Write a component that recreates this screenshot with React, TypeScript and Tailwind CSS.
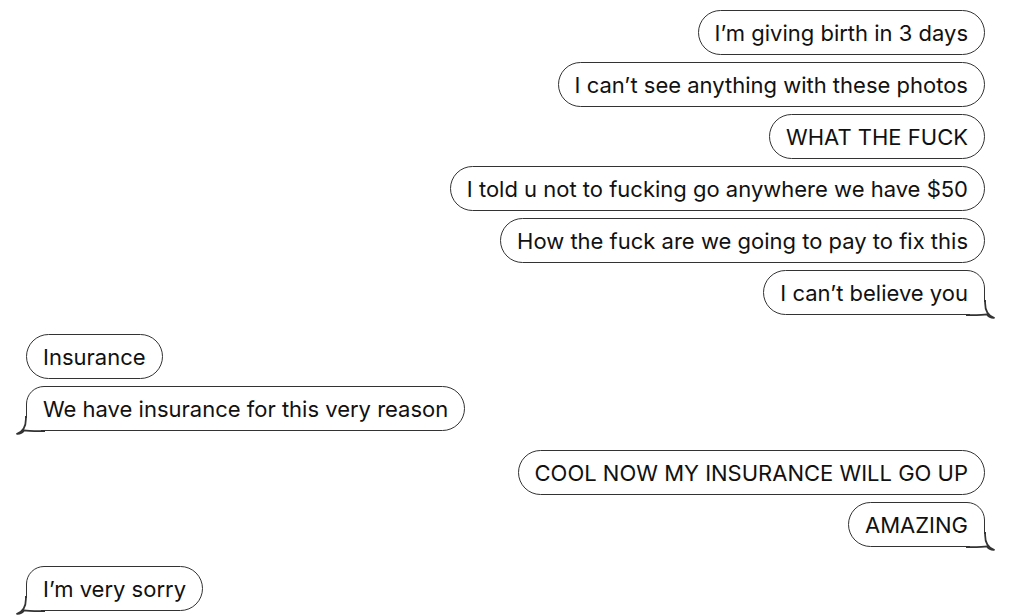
import React from "react";

type Msg = { text: string; tail?: boolean };
type Group = { side: "left" | "right"; messages: Msg[] };

const groups: Group[] = [
  {
    side: "right",
    messages: [
      { text: "I’m giving birth in 3 days" },
      { text: "I can’t see anything with these photos" },
      { text: "WHAT THE FUCK" },
      { text: "I told u not to fucking go anywhere we have $50" },
      { text: "How the fuck are we going to pay to fix this" },
      { text: "I can’t believe you", tail: true },
    ],
  },
  {
    side: "left",
    messages: [
      { text: "Insurance" },
      { text: "We have insurance for this very reason", tail: true },
    ],
  },
  {
    side: "right",
    messages: [
      { text: "COOL NOW MY INSURANCE WILL GO UP" },
      { text: "AMAZING", tail: true },
    ],
  },
  {
    side: "left",
    messages: [{ text: "I’m very sorry", tail: true }],
  },
];

// drawn for the right side, flipped for the left
function Tail({ side }: { side: "left" | "right" }) {
  return (
    <svg
      width="30"
      height="20"
      viewBox="0 0 30 20"
      className={
        side === "right"
          ? "pointer-events-none absolute -right-[11.75px] -bottom-[5.75px]"
          : "pointer-events-none absolute -left-[11.75px] -bottom-[5.75px]"
      }
    >
      <g transform={side === "left" ? "translate(30 0) scale(-1 1)" : undefined}>
        <rect x="12" y="2" width="10" height="16" fill="#fff" />
        <rect x="4" y="13" width="18" height="5" fill="#fff" />
        <path
          d="M19.1 0 L19.1 3 C19.1 10 21.5 15.5 28 17.8 C25 18 22.6 16.6 21 14.4 C17.5 15.1 12 15.1 5 15.1 L0 15.1"
          fill="none"
          stroke="#333"
          strokeWidth="1.75"
          strokeLinejoin="round"
          strokeLinecap="round"
        />
      </g>
    </svg>
  );
}

function Bubble({ side, text, tail }: { side: "left" | "right"; text: string; tail?: boolean }) {
  let shape = "rounded-[22.5px]";
  if (tail) shape = side === "right" ? "rounded-l-[22.5px] rounded-tr-[18px]" : "rounded-r-[22.5px] rounded-tl-[18px]";
  return (
    <div className={side === "right" ? "flex justify-end" : "flex justify-start"}>
      <div className={`relative flex h-[45px] items-center border-[1.75px] border-[#333] bg-white px-4 ${shape}`}>
        <span className="whitespace-nowrap text-[22px] leading-none text-[#111]">{text}</span>
        {tail && <Tail side={side} />}
      </div>
    </div>
  );
}

export default function App() {
  return (
    <div
      className="flex min-h-[616px] w-[1014px] flex-col gap-[19px] bg-white pl-[26px] pr-[29px] pt-[10px]"
      style={{ fontFamily: "Inter, 'Liberation Sans', sans-serif" }}
    >
      {groups.map((group, gi) => (
        <div key={gi} className="flex flex-col gap-[7px]">
          {group.messages.map((m) => (
            <Bubble key={m.text} side={group.side} text={m.text} tail={m.tail} />
          ))}
        </div>
      ))}
    </div>
  );
}
